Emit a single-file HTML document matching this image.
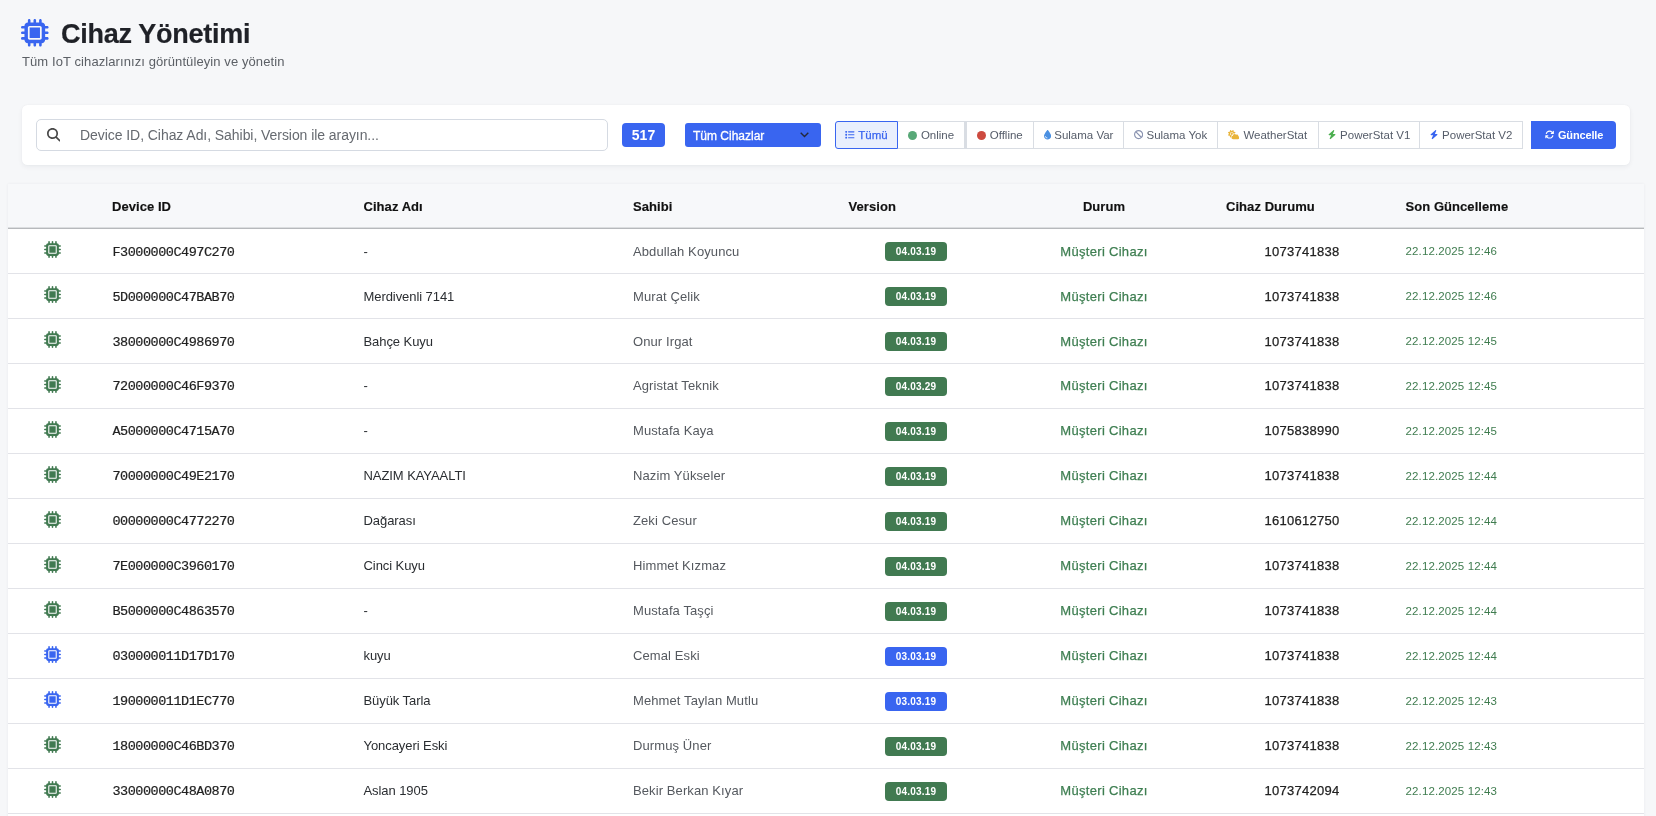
<!DOCTYPE html>
<html lang="tr">
<head>
<meta charset="utf-8">
<title>Cihaz Yönetimi</title>
<style>
*{box-sizing:border-box;margin:0;padding:0}
html,body{width:1656px;height:816px;overflow:hidden}
body{background:#f6f7f9;font-family:"Liberation Sans",sans-serif;color:#212529;position:relative}
.page{position:absolute;left:0;top:0;width:1656px;height:816px;will-change:transform;background:#f6f7f9}
.hicon{position:absolute;left:21.300px;top:19px;width:27.600px;height:27.600px;color:#3965f0}
.hicon svg{width:100%;height:100%;display:block}
h1{position:absolute;left:61px;top:18px;font-size:27px;line-height:32px;font-weight:700;color:#1f2127;white-space:nowrap;letter-spacing:-.28px;-webkit-text-stroke:.2px #1f2127}
.sub{position:absolute;left:22px;top:53.500px;font-size:13px;line-height:16px;color:#5c6066;white-space:nowrap;letter-spacing:.09px}
.card{position:absolute;left:22px;top:105px;width:1608px;height:60px;background:#fff;border-radius:5.500px;box-shadow:0 2px 5px rgba(20,30,60,.055),0 0 2px rgba(20,30,60,.04)}
.search{position:absolute;left:14px;top:14px;width:572px;height:32px;border:1px solid #d5dae2;border-radius:5px;background:#fff}
.search svg{position:absolute;left:9.600px;top:8.100px;width:13.600px;height:13.600px;color:#484848}
.search .ph{position:absolute;left:43px;top:7px;font-size:14px;line-height:16px;color:#666a70;white-space:nowrap;letter-spacing:-.06px}
.cnt{position:absolute;left:600px;top:18px;width:43px;height:24px;border-radius:4px;background:#3965f0;color:#fff;font-weight:700;font-size:14px;line-height:24px;text-align:center}
.sel{position:absolute;left:663px;top:18px;width:136px;height:24px;border-radius:3px;background:#3965f0;color:#fff;font-size:12px;line-height:24px}
.sel .t{position:absolute;left:8px;top:1px;white-space:nowrap;-webkit-text-stroke:.3px #fff}
.sel svg{position:absolute;left:115px;top:9px;width:9px;height:6px}
.grp{position:absolute;left:813px;top:16px;height:28px;display:flex}
.fb{height:28px;border:1px solid #d9dde3;border-left-width:0;background:#fff;color:#555c69;font-size:11.500px;line-height:26px;white-space:nowrap;display:flex;align-items:center;justify-content:center}
.fb svg{display:block;flex:none}
.fb.first{border:1px solid #3965f0;background:#e9effd;color:#3965f0;border-radius:3px 0 0 3px}
.fb.b2{border-left:2px solid #d9dde3}
.m{-webkit-text-stroke:.25px currentColor}
.i-list{width:9.500px;height:9.500px;margin-right:3.500px}
.i-drop{width:7.200px;height:9.500px;margin-left:1px;margin-right:3.500px}
.i-ban{width:9.200px;height:9.200px;margin-left:1px;margin-right:3.500px}
.i-sun{width:11.500px;height:9.200px;margin-right:4px}
.i-bolt{width:8px;height:9.200px;margin-left:1.500px;margin-right:4px}
.i-ref{width:9.200px;height:9.200px;margin-right:4px}
.dot{width:9px;height:9px;border-radius:50%;margin-right:4px;flex:none}
.upd{position:absolute;left:1509px;top:16px;width:85px;height:28px;border-radius:0 4px 4px 0;background:#3965f0;color:#fff;font-size:11px;font-weight:700;display:flex;align-items:center;justify-content:center;white-space:nowrap;letter-spacing:-.15px;padding-left:1px}
.tbl{position:absolute;left:8px;top:184px;width:1636px;height:640px;background:#fff;box-shadow:0 0 3px rgba(20,30,60,.06)}
.thead{position:relative;height:45px;background:#f7f8fa;border-bottom:1px solid #b7b9bc}
.thead:after{content:"";position:absolute;left:0;right:0;bottom:0;height:1px;background:#dcdee0}
.h{position:absolute;top:15px;font-size:13px;line-height:16px;font-weight:700;color:#111;white-space:nowrap;letter-spacing:.06px;-webkit-text-stroke:.15px #111}
.h1{left:104px}.h2{left:355.500px}.h3{left:625px}.h4{left:840.500px}.h5{left:1036px;width:120px;text-align:center}.h6{left:1218px}.h7{left:1397.500px}
.row{position:relative;height:45px;border-bottom:1px solid #e2e3e8;background:#fff}
.ic{position:absolute;left:36px;top:12px;width:17px;height:17px}
.ic svg{width:100%;height:100%;display:block}
.ic.g{color:#417a51}.ic.b{color:#3965f0}
.c{position:absolute;top:15px;font-size:13px;line-height:16px;white-space:nowrap}
.c1{left:104.500px;top:15.500px;font-family:"Liberation Mono",monospace;font-size:13.500px;letter-spacing:-.48px;color:#222;-webkit-text-stroke:.2px #222}
.c2{left:355.500px;color:#2a2d31;letter-spacing:-.07px}
.c3{left:625px;color:#55595f;letter-spacing:.1px}
.c4{left:828px;width:160px;text-align:center;top:13px}
.ver{display:inline-block;height:19px;line-height:19px;padding:0 11px;letter-spacing:.22px;border-radius:4px;color:#fff;font-weight:700;font-size:10px;vertical-align:top}
.ver.g{background:#417a51}.ver.b{background:#3965f0}
.c5{left:1016px;width:160px;text-align:center;color:#3f7f52;letter-spacing:.3px;-webkit-text-stroke:.25px #3f7f52}
.c6{left:1214px;width:160px;text-align:center;color:#222;letter-spacing:.25px;-webkit-text-stroke:.25px #222}
.c7{left:1397.500px;top:14px;color:#3f7c4f;font-size:11.500px;letter-spacing:.13px}
.u .c1{top:14.500px}.u .c2,.u .c3,.u .c5,.u .c6{top:14px}

</style>
</head>
<body>
<div class="page">
<div class="hicon"><svg viewBox="0 0 512 512"><path fill="currentColor" d="M176 24c0-13.300-10.700-24-24-24s-24 10.700-24 24V64c-35.300 0-64 28.700-64 64H24c-13.300 0-24 10.700-24 24s10.700 24 24 24H64v56H24c-13.300 0-24 10.700-24 24s10.700 24 24 24H64v56H24c-13.300 0-24 10.700-24 24s10.700 24 24 24H64c0 35.300 28.700 64 64 64v40c0 13.300 10.700 24 24 24s24-10.700 24-24V448h56v40c0 13.300 10.700 24 24 24s24-10.700 24-24V448h56v40c0 13.300 10.700 24 24 24s24-10.700 24-24V448c35.300 0 64-28.700 64-64h40c13.300 0 24-10.700 24-24s-10.700-24-24-24H448V280h40c13.300 0 24-10.700 24-24s-10.700-24-24-24H448V176h40c13.300 0 24-10.700 24-24s-10.700-24-24-24H448c0-35.300-28.700-64-64-64V24c0-13.300-10.700-24-24-24s-24 10.700-24 24V64H280V24c0-13.300-10.700-24-24-24s-24 10.700-24 24V64H176V24zM160 128H352c17.700 0 32 14.300 32 32V352c0 17.700-14.300 32-32 32H160c-17.700 0-32-14.300-32-32V160c0-17.700 14.300-32 32-32zm192 32H160V352H352V160z"/></svg></div>
<h1>Cihaz Yönetimi</h1>
<div class="sub">Tüm IoT cihazlarınızı görüntüleyin ve yönetin</div>
<div class="card">
<div class="search"><svg viewBox="0 0 512 512"><path fill="currentColor" d="M416 208c0 45.900-14.900 88.300-40 122.700L502.600 457.400c12.500 12.500 12.500 32.800 0 45.300s-32.800 12.500-45.300 0L330.700 376c-34.400 25.200-76.800 40-122.700 40C93.100 416 0 322.900 0 208S93.100 0 208 0S416 93.100 416 208zM208 352a144 144 0 1 0 0-288 144 144 0 1 0 0 288z"/></svg><span class="ph">Device ID, Cihaz Adı, Sahibi, Version ile arayın...</span></div>
<div class="cnt">517</div>
<div class="sel"><span class="t">Tüm Cihazlar</span><svg viewBox="0 0 9 6"><path d="M0.7 0.8L4.5 4.6L8.3 0.8" fill="none" stroke="#23283a" stroke-width="1.4"/></svg></div>
<div class="grp">
<div class="fb first" style="width:63px"><svg class="i-list" viewBox="0 0 512 512"><path fill="currentColor" d="M40 48C26.700 48 16 58.700 16 72v48c0 13.300 10.700 24 24 24H88c13.300 0 24-10.700 24-24V72c0-13.300-10.700-24-24-24H40zM192 64c-17.700 0-32 14.300-32 32s14.300 32 32 32H480c17.700 0 32-14.300 32-32s-14.300-32-32-32H192zm0 160c-17.700 0-32 14.300-32 32s14.300 32 32 32H480c17.700 0 32-14.300 32-32s-14.300-32-32-32H192zm0 160c-17.700 0-32 14.300-32 32s14.300 32 32 32H480c17.700 0 32-14.300 32-32s-14.300-32-32-32H192zM16 232v48c0 13.300 10.700 24 24 24H88c13.300 0 24-10.700 24-24V232c0-13.300-10.700-24-24-24H40c-13.300 0-24 10.700-24 24zM40 368c-13.300 0-24 10.700-24 24v48c0 13.300 10.700 24 24 24H88c13.300 0 24-10.700 24-24V392c0-13.300-10.700-24-24-24H40z"/></svg><span class="m">Tümü</span></div>
<div class="fb" style="width:67px"><span class="dot" style="background:#58a877"></span>Online</div>
<div class="fb b2" style="width:68.5px"><span class="dot" style="background:#cd4a3f"></span>Offline</div>
<div class="fb" style="width:90px"><svg class="i-drop" viewBox="0 0 384 512"><path fill="#4a90e2" d="M192 512C86 512 0 426 0 320C0 228.800 130.200 57.700 166.600 11.700C172.600 4.200 181.500 0 191.100 0h1.800c9.600 0 18.500 4.200 24.500 11.700C253.800 57.700 384 228.800 384 320c0 106-86 192-192 192zM96 336c0-8.800-7.200-16-16-16s-16 7.200-16 16c0 61.900 50.100 112 112 112c8.800 0 16-7.200 16-16s-7.200-16-16-16c-44.200 0-80-35.800-80-80z"/></svg>Sulama Var</div>
<div class="fb" style="width:94px"><svg class="i-ban" viewBox="0 0 512 512"><path fill="#8a93b0" d="M367.200 412.500L99.500 144.800C77.100 176.100 64 214.500 64 256c0 106 86 192 192 192c41.500 0 79.900-13.100 111.200-35.500zm45.300-45.300C434.900 335.900 448 297.500 448 256c0-106-86-192-192-192c-41.500 0-79.900 13.100-111.200 35.500L412.500 367.200zM0 256a256 256 0 1 1 512 0A256 256 0 1 1 0 256z"/></svg>Sulama Yok</div>
<div class="fb" style="width:101px"><svg class="i-sun" viewBox="0 0 640 512"><path fill="#e9b43a" d="M294.200 1.200c5.100 2.100 8.700 6.700 9.600 12.100l14.100 84.700 84.700 14.100c5.400 .9 10 4.500 12.100 9.600s1.500 10.900-1.600 15.400l-38.500 55c-2.200-.1-4.400-.2-6.700-.2c-23.300 0-45.100 6.200-64 17.100l0-1.100c0-53-43-96-96-96s-96 43-96 96s43 96 96 96c8.100 0 15.900-1 23.400-2.900c-36.600 18.100-63.300 53.100-69.800 94.900l-24.400 17c-4.500 3.100-10.300 3.800-15.400 1.600s-8.700-6.700-9.600-12.100L98.100 317.900 13.400 303.800c-5.400-.9-10-4.500-12.100-9.600s-1.500-10.900 1.600-15.400L52.500 208 2.900 137.200c-3.200-4.500-3.800-10.300-1.600-15.400s6.700-8.700 12.100-9.600L98.100 98.100l14.100-84.700c.9-5.400 4.500-10 9.600-12.100s10.900-1.500 15.400 1.600L208 52.500 278.800 2.900c4.500-3.200 10.300-3.800 15.400-1.600zM144 208a64 64 0 1 1 128 0 64 64 0 1 1 -128 0zM639.900 431.900c0 44.200-35.800 80-80 80H288c-53 0-96-43-96-96c0-47.600 34.600-87 80-94.600l0-1.300c0-53 43-96 96-96c34.900 0 65.400 18.600 82.200 46.400c13-9.100 28.800-14.400 45.800-14.400c44.200 0 80 35.800 80 80c0 5.900-.6 11.700-1.900 17.200c37.400 6.700 65.800 39.400 65.800 78.700z"/></svg>WeatherStat</div>
<div class="fb" style="width:101px"><svg class="i-bolt" viewBox="0 0 448 512"><path fill="#4caf50" d="M349.400 44.600c5.900-13.700 1.500-29.700-10.600-38.500s-28.600-8-39.900 1.800l-256 224c-10 8.800-13.600 22.900-8.900 35.300S50.700 288 64 288H175.500L98.600 467.400c-5.900 13.700-1.500 29.700 10.600 38.500s28.600 8 39.900-1.800l256-224c10-8.800 13.600-22.900 8.900-35.300s-16.600-20.700-30-20.700H272.500L349.400 44.600z"/></svg>PowerStat V1</div>
<div class="fb last" style="width:103px"><svg class="i-bolt" viewBox="0 0 448 512"><path fill="#3965f0" d="M349.400 44.600c5.900-13.700 1.500-29.700-10.600-38.500s-28.600-8-39.900 1.800l-256 224c-10 8.800-13.600 22.900-8.900 35.300S50.700 288 64 288H175.500L98.600 467.400c-5.900 13.700-1.500 29.700 10.600 38.500s28.600 8 39.900-1.800l256-224c10-8.800 13.600-22.900 8.900-35.300s-16.600-20.700-30-20.700H272.500L349.400 44.600z"/></svg>PowerStat V2</div>
</div>
<div class="upd"><svg class="i-ref" viewBox="0 0 512 512"><path fill="#fff" d="M105.100 202.600c7.700-21.800 20.200-42.300 37.800-59.800c62.500-62.500 163.800-62.500 226.300 0L386.300 160H352c-17.700 0-32 14.300-32 32s14.300 32 32 32H463.500c0 0 0 0 0 0h.4c17.700 0 32-14.300 32-32V80c0-17.700-14.300-32-32-32s-32 14.300-32 32v35.200L414.400 97.600c-87.500-87.500-229.300-87.500-316.800 0C73.200 122 55.600 150.700 44.800 181.400c-5.900 16.700 2.900 34.900 19.500 40.800s34.900-2.900 40.800-19.500zM39 289.300c-5 1.500-9.800 4.200-13.700 8.200c-4 4-6.700 8.800-8.100 14c-.3 1.200-.6 2.500-.8 3.800c-.3 1.700-.4 3.400-.4 5.100V432c0 17.700 14.300 32 32 32s32-14.300 32-32V396.900l17.600 17.500 0 0c87.500 87.400 229.300 87.400 316.700 0c24.400-24.400 42.100-53.100 52.900-83.700c5.900-16.700-2.900-34.900-19.500-40.800s-34.900 2.900-40.800 19.500c-7.700 21.800-20.200 42.300-37.800 59.800c-62.500 62.500-163.800 62.500-226.300 0l-.1-.1L125.600 352H160c17.700 0 32-14.300 32-32s-14.300-32-32-32H48.400c-1.600 0-3.200 .1-4.800 .3s-3.100 .5-4.600 1z"/></svg>Güncelle</div>
</div>
<div class="tbl">
<div class="thead"><span class="h h1">Device ID</span><span class="h h2">Cihaz Adı</span><span class="h h3">Sahibi</span><span class="h h4">Version</span><span class="h h5">Durum</span><span class="h h6">Cihaz Durumu</span><span class="h h7">Son Güncelleme</span></div>
<div class="row"><span class="ic g"><svg viewBox="0 0 512 512"><path fill="currentColor" d="M176 24c0-13.300-10.700-24-24-24s-24 10.700-24 24V64c-35.300 0-64 28.700-64 64H24c-13.300 0-24 10.700-24 24s10.700 24 24 24H64v56H24c-13.300 0-24 10.700-24 24s10.700 24 24 24H64v56H24c-13.300 0-24 10.700-24 24s10.700 24 24 24H64c0 35.300 28.700 64 64 64v40c0 13.300 10.700 24 24 24s24-10.700 24-24V448h56v40c0 13.300 10.700 24 24 24s24-10.700 24-24V448h56v40c0 13.300 10.700 24 24 24s24-10.700 24-24V448c35.300 0 64-28.700 64-64h40c13.300 0 24-10.700 24-24s-10.700-24-24-24H448V280h40c13.300 0 24-10.700 24-24s-10.700-24-24-24H448V176h40c13.300 0 24-10.700 24-24s-10.700-24-24-24H448c0-35.300-28.700-64-64-64V24c0-13.300-10.700-24-24-24s-24 10.700-24 24V64H280V24c0-13.300-10.700-24-24-24s-24 10.700-24 24V64H176V24zM160 128H352c17.700 0 32 14.300 32 32V352c0 17.700-14.300 32-32 32H160c-17.700 0-32-14.300-32-32V160c0-17.700 14.300-32 32-32zm192 32H160V352H352V160z"/></svg></span><span class="c c1">F3000000C497C270</span><span class="c c2">-</span><span class="c c3">Abdullah Koyuncu</span><span class="c c4"><span class="ver g">04.03.19</span></span><span class="c c5">Müşteri Cihazı</span><span class="c c6">1073741838</span><span class="c c7">22.12.2025 12:46</span></div>
<div class="row"><span class="ic g"><svg viewBox="0 0 512 512"><path fill="currentColor" d="M176 24c0-13.300-10.700-24-24-24s-24 10.700-24 24V64c-35.300 0-64 28.700-64 64H24c-13.300 0-24 10.700-24 24s10.700 24 24 24H64v56H24c-13.300 0-24 10.700-24 24s10.700 24 24 24H64v56H24c-13.300 0-24 10.700-24 24s10.700 24 24 24H64c0 35.300 28.700 64 64 64v40c0 13.300 10.700 24 24 24s24-10.700 24-24V448h56v40c0 13.300 10.700 24 24 24s24-10.700 24-24V448h56v40c0 13.300 10.700 24 24 24s24-10.700 24-24V448c35.300 0 64-28.700 64-64h40c13.300 0 24-10.700 24-24s-10.700-24-24-24H448V280h40c13.300 0 24-10.700 24-24s-10.700-24-24-24H448V176h40c13.300 0 24-10.700 24-24s-10.700-24-24-24H448c0-35.300-28.700-64-64-64V24c0-13.300-10.700-24-24-24s-24 10.700-24 24V64H280V24c0-13.300-10.700-24-24-24s-24 10.700-24 24V64H176V24zM160 128H352c17.700 0 32 14.300 32 32V352c0 17.700-14.300 32-32 32H160c-17.700 0-32-14.300-32-32V160c0-17.700 14.300-32 32-32zm192 32H160V352H352V160z"/></svg></span><span class="c c1">5D000000C47BAB70</span><span class="c c2">Merdivenli 7141</span><span class="c c3">Murat Çelik</span><span class="c c4"><span class="ver g">04.03.19</span></span><span class="c c5">Müşteri Cihazı</span><span class="c c6">1073741838</span><span class="c c7">22.12.2025 12:46</span></div>
<div class="row"><span class="ic g"><svg viewBox="0 0 512 512"><path fill="currentColor" d="M176 24c0-13.300-10.700-24-24-24s-24 10.700-24 24V64c-35.300 0-64 28.700-64 64H24c-13.300 0-24 10.700-24 24s10.700 24 24 24H64v56H24c-13.300 0-24 10.700-24 24s10.700 24 24 24H64v56H24c-13.300 0-24 10.700-24 24s10.700 24 24 24H64c0 35.300 28.700 64 64 64v40c0 13.300 10.700 24 24 24s24-10.700 24-24V448h56v40c0 13.300 10.700 24 24 24s24-10.700 24-24V448h56v40c0 13.300 10.700 24 24 24s24-10.700 24-24V448c35.300 0 64-28.700 64-64h40c13.300 0 24-10.700 24-24s-10.700-24-24-24H448V280h40c13.300 0 24-10.700 24-24s-10.700-24-24-24H448V176h40c13.300 0 24-10.700 24-24s-10.700-24-24-24H448c0-35.300-28.700-64-64-64V24c0-13.300-10.700-24-24-24s-24 10.700-24 24V64H280V24c0-13.300-10.700-24-24-24s-24 10.700-24 24V64H176V24zM160 128H352c17.700 0 32 14.300 32 32V352c0 17.700-14.300 32-32 32H160c-17.700 0-32-14.300-32-32V160c0-17.700 14.300-32 32-32zm192 32H160V352H352V160z"/></svg></span><span class="c c1">38000000C4986970</span><span class="c c2">Bahçe Kuyu</span><span class="c c3">Onur Irgat</span><span class="c c4"><span class="ver g">04.03.19</span></span><span class="c c5">Müşteri Cihazı</span><span class="c c6">1073741838</span><span class="c c7">22.12.2025 12:45</span></div>
<div class="row u"><span class="ic g"><svg viewBox="0 0 512 512"><path fill="currentColor" d="M176 24c0-13.300-10.700-24-24-24s-24 10.700-24 24V64c-35.300 0-64 28.700-64 64H24c-13.300 0-24 10.700-24 24s10.700 24 24 24H64v56H24c-13.300 0-24 10.700-24 24s10.700 24 24 24H64v56H24c-13.300 0-24 10.700-24 24s10.700 24 24 24H64c0 35.300 28.700 64 64 64v40c0 13.300 10.700 24 24 24s24-10.700 24-24V448h56v40c0 13.300 10.700 24 24 24s24-10.700 24-24V448h56v40c0 13.300 10.700 24 24 24s24-10.700 24-24V448c35.300 0 64-28.700 64-64h40c13.300 0 24-10.700 24-24s-10.700-24-24-24H448V280h40c13.300 0 24-10.700 24-24s-10.700-24-24-24H448V176h40c13.300 0 24-10.700 24-24s-10.700-24-24-24H448c0-35.300-28.700-64-64-64V24c0-13.300-10.700-24-24-24s-24 10.700-24 24V64H280V24c0-13.300-10.700-24-24-24s-24 10.700-24 24V64H176V24zM160 128H352c17.700 0 32 14.300 32 32V352c0 17.700-14.300 32-32 32H160c-17.700 0-32-14.300-32-32V160c0-17.700 14.300-32 32-32zm192 32H160V352H352V160z"/></svg></span><span class="c c1">72000000C46F9370</span><span class="c c2">-</span><span class="c c3">Agristat Teknik</span><span class="c c4"><span class="ver g">04.03.29</span></span><span class="c c5">Müşteri Cihazı</span><span class="c c6">1073741838</span><span class="c c7">22.12.2025 12:45</span></div>
<div class="row u"><span class="ic g"><svg viewBox="0 0 512 512"><path fill="currentColor" d="M176 24c0-13.300-10.700-24-24-24s-24 10.700-24 24V64c-35.300 0-64 28.700-64 64H24c-13.300 0-24 10.700-24 24s10.700 24 24 24H64v56H24c-13.300 0-24 10.700-24 24s10.700 24 24 24H64v56H24c-13.300 0-24 10.700-24 24s10.700 24 24 24H64c0 35.300 28.700 64 64 64v40c0 13.300 10.700 24 24 24s24-10.700 24-24V448h56v40c0 13.300 10.700 24 24 24s24-10.700 24-24V448h56v40c0 13.300 10.700 24 24 24s24-10.700 24-24V448c35.300 0 64-28.700 64-64h40c13.300 0 24-10.700 24-24s-10.700-24-24-24H448V280h40c13.300 0 24-10.700 24-24s-10.700-24-24-24H448V176h40c13.300 0 24-10.700 24-24s-10.700-24-24-24H448c0-35.300-28.700-64-64-64V24c0-13.300-10.700-24-24-24s-24 10.700-24 24V64H280V24c0-13.300-10.700-24-24-24s-24 10.700-24 24V64H176V24zM160 128H352c17.700 0 32 14.300 32 32V352c0 17.700-14.300 32-32 32H160c-17.700 0-32-14.300-32-32V160c0-17.700 14.300-32 32-32zm192 32H160V352H352V160z"/></svg></span><span class="c c1">A5000000C4715A70</span><span class="c c2">-</span><span class="c c3">Mustafa Kaya</span><span class="c c4"><span class="ver g">04.03.19</span></span><span class="c c5">Müşteri Cihazı</span><span class="c c6">1075838990</span><span class="c c7">22.12.2025 12:45</span></div>
<div class="row u"><span class="ic g"><svg viewBox="0 0 512 512"><path fill="currentColor" d="M176 24c0-13.300-10.700-24-24-24s-24 10.700-24 24V64c-35.300 0-64 28.700-64 64H24c-13.300 0-24 10.700-24 24s10.700 24 24 24H64v56H24c-13.300 0-24 10.700-24 24s10.700 24 24 24H64v56H24c-13.300 0-24 10.700-24 24s10.700 24 24 24H64c0 35.300 28.700 64 64 64v40c0 13.300 10.700 24 24 24s24-10.700 24-24V448h56v40c0 13.300 10.700 24 24 24s24-10.700 24-24V448h56v40c0 13.300 10.700 24 24 24s24-10.700 24-24V448c35.300 0 64-28.700 64-64h40c13.300 0 24-10.700 24-24s-10.700-24-24-24H448V280h40c13.300 0 24-10.700 24-24s-10.700-24-24-24H448V176h40c13.300 0 24-10.700 24-24s-10.700-24-24-24H448c0-35.300-28.700-64-64-64V24c0-13.300-10.700-24-24-24s-24 10.700-24 24V64H280V24c0-13.300-10.700-24-24-24s-24 10.700-24 24V64H176V24zM160 128H352c17.700 0 32 14.300 32 32V352c0 17.700-14.300 32-32 32H160c-17.700 0-32-14.300-32-32V160c0-17.700 14.300-32 32-32zm192 32H160V352H352V160z"/></svg></span><span class="c c1">70000000C49E2170</span><span class="c c2">NAZIM KAYAALTI</span><span class="c c3">Nazim Yükseler</span><span class="c c4"><span class="ver g">04.03.19</span></span><span class="c c5">Müşteri Cihazı</span><span class="c c6">1073741838</span><span class="c c7">22.12.2025 12:44</span></div>
<div class="row u"><span class="ic g"><svg viewBox="0 0 512 512"><path fill="currentColor" d="M176 24c0-13.300-10.700-24-24-24s-24 10.700-24 24V64c-35.300 0-64 28.700-64 64H24c-13.300 0-24 10.700-24 24s10.700 24 24 24H64v56H24c-13.300 0-24 10.700-24 24s10.700 24 24 24H64v56H24c-13.300 0-24 10.700-24 24s10.700 24 24 24H64c0 35.300 28.700 64 64 64v40c0 13.300 10.700 24 24 24s24-10.700 24-24V448h56v40c0 13.300 10.700 24 24 24s24-10.700 24-24V448h56v40c0 13.300 10.700 24 24 24s24-10.700 24-24V448c35.300 0 64-28.700 64-64h40c13.300 0 24-10.700 24-24s-10.700-24-24-24H448V280h40c13.300 0 24-10.700 24-24s-10.700-24-24-24H448V176h40c13.300 0 24-10.700 24-24s-10.700-24-24-24H448c0-35.300-28.700-64-64-64V24c0-13.300-10.700-24-24-24s-24 10.700-24 24V64H280V24c0-13.300-10.700-24-24-24s-24 10.700-24 24V64H176V24zM160 128H352c17.700 0 32 14.300 32 32V352c0 17.700-14.300 32-32 32H160c-17.700 0-32-14.300-32-32V160c0-17.700 14.300-32 32-32zm192 32H160V352H352V160z"/></svg></span><span class="c c1">00000000C4772270</span><span class="c c2">Dağarası</span><span class="c c3">Zeki Cesur</span><span class="c c4"><span class="ver g">04.03.19</span></span><span class="c c5">Müşteri Cihazı</span><span class="c c6">1610612750</span><span class="c c7">22.12.2025 12:44</span></div>
<div class="row u"><span class="ic g"><svg viewBox="0 0 512 512"><path fill="currentColor" d="M176 24c0-13.300-10.700-24-24-24s-24 10.700-24 24V64c-35.300 0-64 28.700-64 64H24c-13.300 0-24 10.700-24 24s10.700 24 24 24H64v56H24c-13.300 0-24 10.700-24 24s10.700 24 24 24H64v56H24c-13.300 0-24 10.700-24 24s10.700 24 24 24H64c0 35.300 28.700 64 64 64v40c0 13.300 10.700 24 24 24s24-10.700 24-24V448h56v40c0 13.300 10.700 24 24 24s24-10.700 24-24V448h56v40c0 13.300 10.700 24 24 24s24-10.700 24-24V448c35.300 0 64-28.700 64-64h40c13.300 0 24-10.700 24-24s-10.700-24-24-24H448V280h40c13.300 0 24-10.700 24-24s-10.700-24-24-24H448V176h40c13.300 0 24-10.700 24-24s-10.700-24-24-24H448c0-35.300-28.700-64-64-64V24c0-13.300-10.700-24-24-24s-24 10.700-24 24V64H280V24c0-13.300-10.700-24-24-24s-24 10.700-24 24V64H176V24zM160 128H352c17.700 0 32 14.300 32 32V352c0 17.700-14.300 32-32 32H160c-17.700 0-32-14.300-32-32V160c0-17.700 14.300-32 32-32zm192 32H160V352H352V160z"/></svg></span><span class="c c1">7E000000C3960170</span><span class="c c2">Cinci Kuyu</span><span class="c c3">Himmet Kızmaz</span><span class="c c4"><span class="ver g">04.03.19</span></span><span class="c c5">Müşteri Cihazı</span><span class="c c6">1073741838</span><span class="c c7">22.12.2025 12:44</span></div>
<div class="row u"><span class="ic g"><svg viewBox="0 0 512 512"><path fill="currentColor" d="M176 24c0-13.300-10.700-24-24-24s-24 10.700-24 24V64c-35.300 0-64 28.700-64 64H24c-13.300 0-24 10.700-24 24s10.700 24 24 24H64v56H24c-13.300 0-24 10.700-24 24s10.700 24 24 24H64v56H24c-13.300 0-24 10.700-24 24s10.700 24 24 24H64c0 35.300 28.700 64 64 64v40c0 13.300 10.700 24 24 24s24-10.700 24-24V448h56v40c0 13.300 10.700 24 24 24s24-10.700 24-24V448h56v40c0 13.300 10.700 24 24 24s24-10.700 24-24V448c35.300 0 64-28.700 64-64h40c13.300 0 24-10.700 24-24s-10.700-24-24-24H448V280h40c13.300 0 24-10.700 24-24s-10.700-24-24-24H448V176h40c13.300 0 24-10.700 24-24s-10.700-24-24-24H448c0-35.300-28.700-64-64-64V24c0-13.300-10.700-24-24-24s-24 10.700-24 24V64H280V24c0-13.300-10.700-24-24-24s-24 10.700-24 24V64H176V24zM160 128H352c17.700 0 32 14.300 32 32V352c0 17.700-14.300 32-32 32H160c-17.700 0-32-14.300-32-32V160c0-17.700 14.300-32 32-32zm192 32H160V352H352V160z"/></svg></span><span class="c c1">B5000000C4863570</span><span class="c c2">-</span><span class="c c3">Mustafa Taşçi</span><span class="c c4"><span class="ver g">04.03.19</span></span><span class="c c5">Müşteri Cihazı</span><span class="c c6">1073741838</span><span class="c c7">22.12.2025 12:44</span></div>
<div class="row u"><span class="ic b"><svg viewBox="0 0 512 512"><path fill="currentColor" d="M176 24c0-13.300-10.700-24-24-24s-24 10.700-24 24V64c-35.300 0-64 28.700-64 64H24c-13.300 0-24 10.700-24 24s10.700 24 24 24H64v56H24c-13.300 0-24 10.700-24 24s10.700 24 24 24H64v56H24c-13.300 0-24 10.700-24 24s10.700 24 24 24H64c0 35.300 28.700 64 64 64v40c0 13.300 10.700 24 24 24s24-10.700 24-24V448h56v40c0 13.300 10.700 24 24 24s24-10.700 24-24V448h56v40c0 13.300 10.700 24 24 24s24-10.700 24-24V448c35.300 0 64-28.700 64-64h40c13.300 0 24-10.700 24-24s-10.700-24-24-24H448V280h40c13.300 0 24-10.700 24-24s-10.700-24-24-24H448V176h40c13.300 0 24-10.700 24-24s-10.700-24-24-24H448c0-35.300-28.700-64-64-64V24c0-13.300-10.700-24-24-24s-24 10.700-24 24V64H280V24c0-13.300-10.700-24-24-24s-24 10.700-24 24V64H176V24zM160 128H352c17.700 0 32 14.300 32 32V352c0 17.700-14.300 32-32 32H160c-17.700 0-32-14.300-32-32V160c0-17.700 14.300-32 32-32zm192 32H160V352H352V160z"/></svg></span><span class="c c1">030000011D17D170</span><span class="c c2">kuyu</span><span class="c c3">Cemal Eski</span><span class="c c4"><span class="ver b">03.03.19</span></span><span class="c c5">Müşteri Cihazı</span><span class="c c6">1073741838</span><span class="c c7">22.12.2025 12:44</span></div>
<div class="row u"><span class="ic b"><svg viewBox="0 0 512 512"><path fill="currentColor" d="M176 24c0-13.300-10.700-24-24-24s-24 10.700-24 24V64c-35.300 0-64 28.700-64 64H24c-13.300 0-24 10.700-24 24s10.700 24 24 24H64v56H24c-13.300 0-24 10.700-24 24s10.700 24 24 24H64v56H24c-13.300 0-24 10.700-24 24s10.700 24 24 24H64c0 35.300 28.700 64 64 64v40c0 13.300 10.700 24 24 24s24-10.700 24-24V448h56v40c0 13.300 10.700 24 24 24s24-10.700 24-24V448h56v40c0 13.300 10.700 24 24 24s24-10.700 24-24V448c35.300 0 64-28.700 64-64h40c13.300 0 24-10.700 24-24s-10.700-24-24-24H448V280h40c13.300 0 24-10.700 24-24s-10.700-24-24-24H448V176h40c13.300 0 24-10.700 24-24s-10.700-24-24-24H448c0-35.300-28.700-64-64-64V24c0-13.300-10.700-24-24-24s-24 10.700-24 24V64H280V24c0-13.300-10.700-24-24-24s-24 10.700-24 24V64H176V24zM160 128H352c17.700 0 32 14.300 32 32V352c0 17.700-14.300 32-32 32H160c-17.700 0-32-14.300-32-32V160c0-17.700 14.300-32 32-32zm192 32H160V352H352V160z"/></svg></span><span class="c c1">190000011D1EC770</span><span class="c c2">Büyük Tarla</span><span class="c c3">Mehmet Taylan Mutlu</span><span class="c c4"><span class="ver b">03.03.19</span></span><span class="c c5">Müşteri Cihazı</span><span class="c c6">1073741838</span><span class="c c7">22.12.2025 12:43</span></div>
<div class="row u"><span class="ic g"><svg viewBox="0 0 512 512"><path fill="currentColor" d="M176 24c0-13.300-10.700-24-24-24s-24 10.700-24 24V64c-35.300 0-64 28.700-64 64H24c-13.300 0-24 10.700-24 24s10.700 24 24 24H64v56H24c-13.300 0-24 10.700-24 24s10.700 24 24 24H64v56H24c-13.300 0-24 10.700-24 24s10.700 24 24 24H64c0 35.300 28.700 64 64 64v40c0 13.300 10.700 24 24 24s24-10.700 24-24V448h56v40c0 13.300 10.700 24 24 24s24-10.700 24-24V448h56v40c0 13.300 10.700 24 24 24s24-10.700 24-24V448c35.300 0 64-28.700 64-64h40c13.300 0 24-10.700 24-24s-10.700-24-24-24H448V280h40c13.300 0 24-10.700 24-24s-10.700-24-24-24H448V176h40c13.300 0 24-10.700 24-24s-10.700-24-24-24H448c0-35.300-28.700-64-64-64V24c0-13.300-10.700-24-24-24s-24 10.700-24 24V64H280V24c0-13.300-10.700-24-24-24s-24 10.700-24 24V64H176V24zM160 128H352c17.700 0 32 14.300 32 32V352c0 17.700-14.300 32-32 32H160c-17.700 0-32-14.300-32-32V160c0-17.700 14.300-32 32-32zm192 32H160V352H352V160z"/></svg></span><span class="c c1">18000000C46BD370</span><span class="c c2">Yoncayeri Eski</span><span class="c c3">Durmuş Üner</span><span class="c c4"><span class="ver g">04.03.19</span></span><span class="c c5">Müşteri Cihazı</span><span class="c c6">1073741838</span><span class="c c7">22.12.2025 12:43</span></div>
<div class="row u"><span class="ic g"><svg viewBox="0 0 512 512"><path fill="currentColor" d="M176 24c0-13.300-10.700-24-24-24s-24 10.700-24 24V64c-35.300 0-64 28.700-64 64H24c-13.300 0-24 10.700-24 24s10.700 24 24 24H64v56H24c-13.300 0-24 10.700-24 24s10.700 24 24 24H64v56H24c-13.300 0-24 10.700-24 24s10.700 24 24 24H64c0 35.300 28.700 64 64 64v40c0 13.300 10.700 24 24 24s24-10.700 24-24V448h56v40c0 13.300 10.700 24 24 24s24-10.700 24-24V448h56v40c0 13.300 10.700 24 24 24s24-10.700 24-24V448c35.300 0 64-28.700 64-64h40c13.300 0 24-10.700 24-24s-10.700-24-24-24H448V280h40c13.300 0 24-10.700 24-24s-10.700-24-24-24H448V176h40c13.300 0 24-10.700 24-24s-10.700-24-24-24H448c0-35.300-28.700-64-64-64V24c0-13.300-10.700-24-24-24s-24 10.700-24 24V64H280V24c0-13.300-10.700-24-24-24s-24 10.700-24 24V64H176V24zM160 128H352c17.700 0 32 14.300 32 32V352c0 17.700-14.300 32-32 32H160c-17.700 0-32-14.300-32-32V160c0-17.700 14.300-32 32-32zm192 32H160V352H352V160z"/></svg></span><span class="c c1">33000000C48A0870</span><span class="c c2">Aslan 1905</span><span class="c c3">Bekir Berkan Kıyar</span><span class="c c4"><span class="ver g">04.03.19</span></span><span class="c c5">Müşteri Cihazı</span><span class="c c6">1073742094</span><span class="c c7">22.12.2025 12:43</span></div>
<div class="row u"><span class="ic g"><svg viewBox="0 0 512 512"><path fill="currentColor" d="M176 24c0-13.300-10.700-24-24-24s-24 10.700-24 24V64c-35.300 0-64 28.700-64 64H24c-13.300 0-24 10.700-24 24s10.700 24 24 24H64v56H24c-13.300 0-24 10.700-24 24s10.700 24 24 24H64v56H24c-13.300 0-24 10.700-24 24s10.700 24 24 24H64c0 35.300 28.700 64 64 64v40c0 13.300 10.700 24 24 24s24-10.700 24-24V448h56v40c0 13.300 10.700 24 24 24s24-10.700 24-24V448h56v40c0 13.300 10.700 24 24 24s24-10.700 24-24V448c35.300 0 64-28.700 64-64h40c13.300 0 24-10.700 24-24s-10.700-24-24-24H448V280h40c13.300 0 24-10.700 24-24s-10.700-24-24-24H448V176h40c13.300 0 24-10.700 24-24s-10.700-24-24-24H448c0-35.300-28.700-64-64-64V24c0-13.300-10.700-24-24-24s-24 10.700-24 24V64H280V24c0-13.300-10.700-24-24-24s-24 10.700-24 24V64H176V24zM160 128H352c17.700 0 32 14.300 32 32V352c0 17.700-14.300 32-32 32H160c-17.700 0-32-14.300-32-32V160c0-17.700 14.300-32 32-32zm192 32H160V352H352V160z"/></svg></span><span class="c c1">21000000C4A11F70</span><span class="c c2">-</span><span class="c c3">Ali Demir</span><span class="c c4"><span class="ver g">04.03.19</span></span><span class="c c5">Müşteri Cihazı</span><span class="c c6">1073741838</span><span class="c c7">22.12.2025 12:43</span></div>
</div>
</div>
</body>
</html>
